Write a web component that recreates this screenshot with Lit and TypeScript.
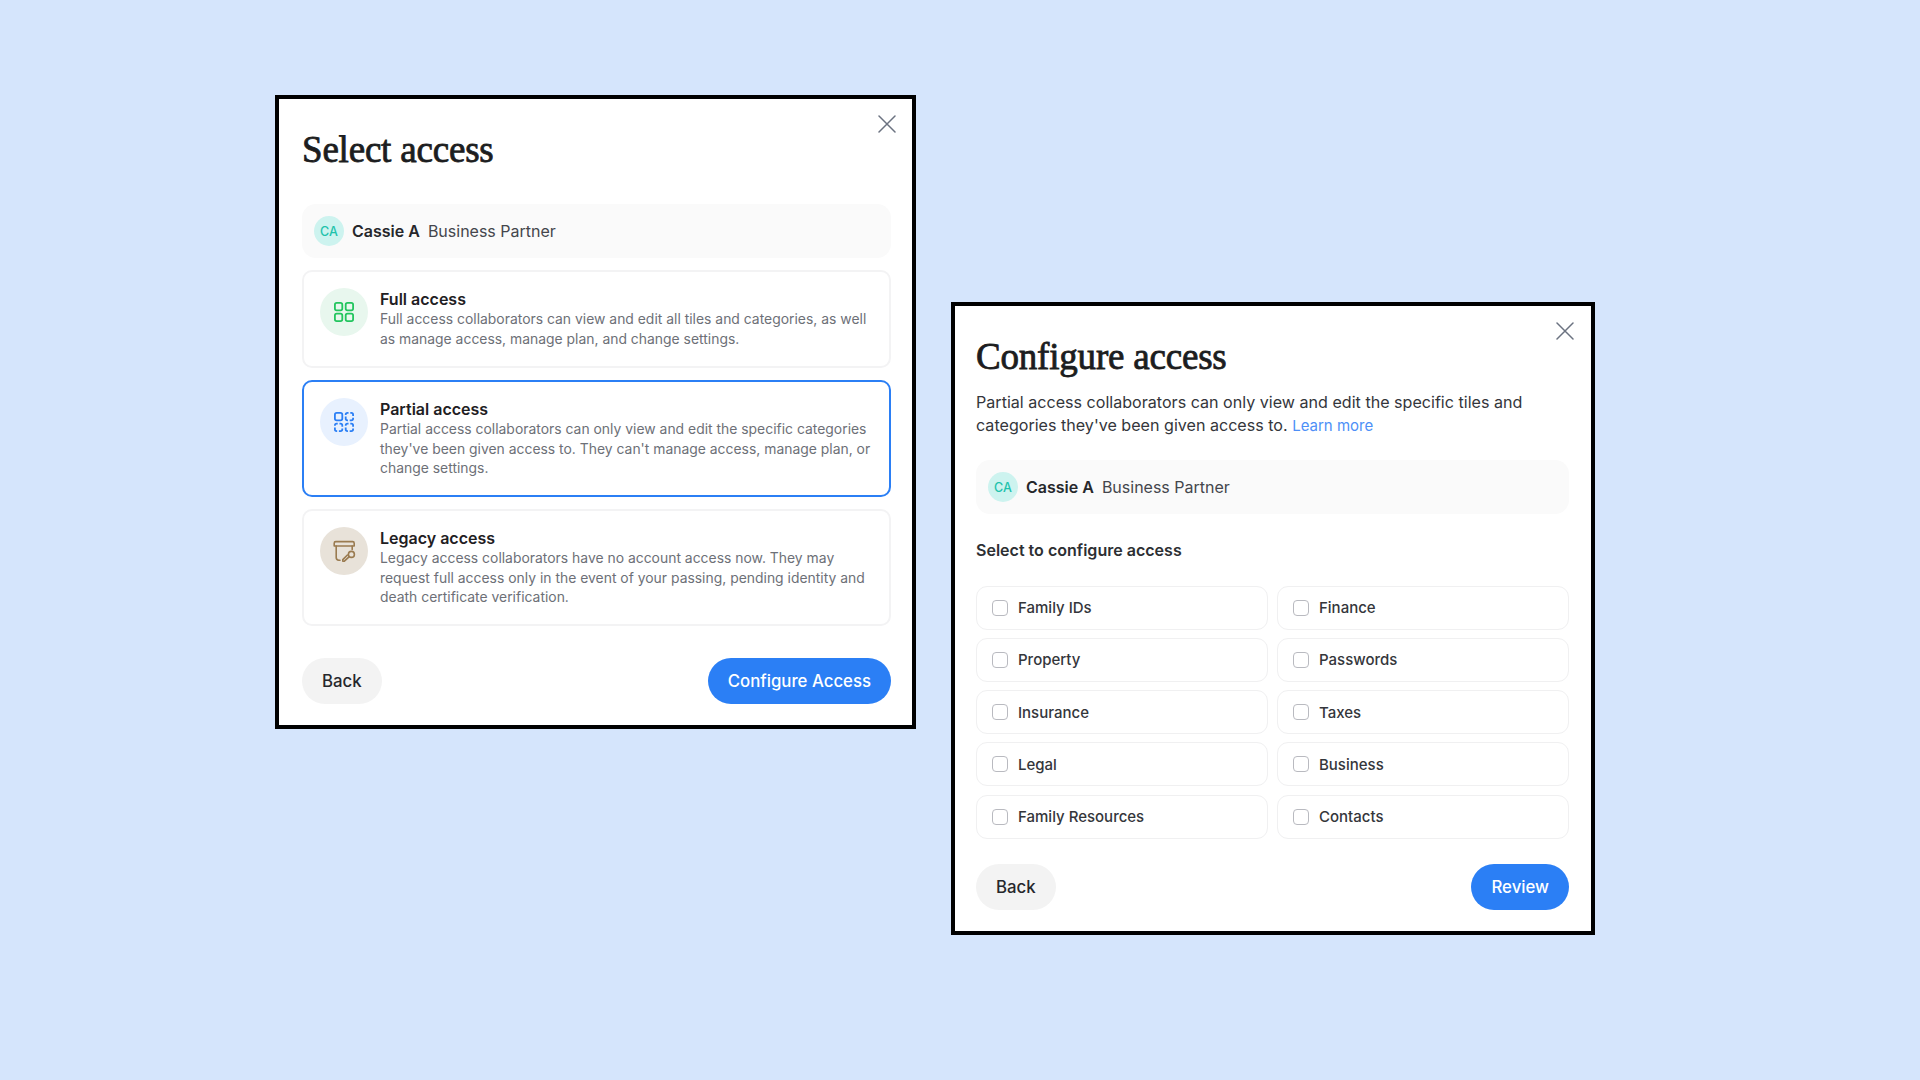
import { LitElement, html, css, svg } from "lit";
import { customElement } from "lit/decorators.js";

const closeIcon = html`<svg class="close-svg" width="18" height="18" viewBox="0 0 18 18" fill="none" stroke="#6b7280" stroke-width="1.5" stroke-linecap="round"><path d="M1 1L17 17M17 1L1 17"/></svg>`;

const gridIcon = html`<svg width="24" height="24" viewBox="0 0 24 24" fill="none" stroke="#22c55e" stroke-width="1.8">
  <rect x="2.9" y="2.9" width="7.4" height="7.4" rx="1.8"/><rect x="13.7" y="2.9" width="7.4" height="7.4" rx="1.8"/>
  <rect x="2.9" y="13.7" width="7.4" height="7.4" rx="1.8"/><rect x="13.7" y="13.7" width="7.4" height="7.4" rx="1.8"/></svg>`;

const dashed = (x: number, y: number) => svg`<rect x=${x} y=${y} width="7.4" height="7.4" rx="1.8" stroke-dasharray="4.9 1.73" stroke-dashoffset="-2.77"/>`;
const partialIcon = html`<svg width="24" height="24" viewBox="0 0 24 24" fill="none" stroke="#2b7ff5" stroke-width="1.8">
  <rect x="2.9" y="2.9" width="7.4" height="7.4" rx="1.8"/>${dashed(13.7, 2.9)}${dashed(2.9, 13.7)}${dashed(13.7, 13.7)}</svg>`;

const legacyIcon = html`<svg width="24" height="24" viewBox="0 0 24 24" fill="none" stroke="#9a7b50" stroke-width="1.6" stroke-linecap="round" stroke-linejoin="round">
  <path d="M2.2 7V4.2Q2.2 2.6 3.8 2.6H20.6Q22.2 2.6 22.2 4.2V7Z"/>
  <path d="M4.2 7V18.6Q4.2 21.2 6.8 21.2H8"/>
  <path d="M20.2 7V10.5"/>
  <circle cx="19.4" cy="15.4" r="3"/>
  <path d="M17.3 17.6L12.4 22.2H10.8V20.6L15.4 16"/></svg>`;

type Card = { icon: unknown; tone: string; title: string; desc: string; selected?: boolean };

const cards: Card[] = [
  { icon: gridIcon, tone: "green", title: "Full access", desc: "Full access collaborators can view and edit all tiles and categories, as well as manage access, manage plan, and change settings." },
  { icon: partialIcon, tone: "blue", selected: true, title: "Partial access", desc: "Partial access collaborators can only view and edit the specific categories they've been given access to. They can't manage access, manage plan, or change settings." },
  { icon: legacyIcon, tone: "tan", title: "Legacy access", desc: "Legacy access collaborators have no account access now. They may request full access only in the event of your passing, pending identity and death certificate verification." },
];

const options = ["Family IDs", "Finance", "Property", "Passwords", "Insurance", "Taxes", "Legal", "Business", "Family Resources", "Contacts"];

@customElement("app-root")
export class AppRoot extends LitElement {
  static styles = css`
    :host {
      display: block;
      min-height: 1080px;
      background: #d5e5fc;
      font-family: Inter, "Liberation Sans", sans-serif;
      color: #1f2023;
    }
    * { box-sizing: border-box; }
    .page {
      display: flex;
      align-items: flex-start;
      gap: 35px;
      padding: 95px 0 0 275px;
    }
    .panel {
      position: relative;
      flex: none;
      background: #fff;
      border: 4px solid #000;
      padding: 0 21px 21px 23px;
    }
    .select { width: 641px; height: 634px; }
    .configure { width: 644px; height: 633px; margin-top: 207px; padding: 0 22px 21px 21px; }
    .close {
      position: absolute;
      top: 16px;
      right: 16px;
      width: 18px;
      height: 18px;
      display: block;
    }
    .configure .close { right: 17px; }
    .close-svg { display: block; }
    h1 {
      margin: 0;
      font-family: "Liberation Serif", serif;
      font-weight: 400;
      font-size: 37px;
      letter-spacing: -0.2px;
      line-height: 44px;
      color: #1c1d20;
      -webkit-text-stroke: 0.8px #1c1d20;
    }
    .select h1 { padding-top: 29px; margin-bottom: 32px; }
    .configure h1 { padding-top: 29px; margin-bottom: 12px; }
    .user {
      display: flex;
      align-items: center;
      height: 54px;
      padding: 0 12px;
      background: #fafafa;
      border-radius: 14px;
      font-size: 16px;
    }
    .avatar {
      width: 30px;
      height: 30px;
      border-radius: 50%;
      background: #cdf3ef;
      color: #1fc2ac;
      font-size: 12.5px;
      font-weight: 500;
      display: flex;
      align-items: center;
      justify-content: center;
      margin-right: 8px;
    }
    .name { font-weight: 600; margin-right: 8px; color: #26272b; }
    .role { color: #44464c; }
    .cards { display: flex; flex-direction: column; gap: 12px; margin-top: 12px; }
    .card {
      display: flex;
      align-items: flex-start;
      gap: 12px;
      padding: 16px 16px 0 16px;
      border: 2px solid #f3f3f4;
      border-radius: 10px;
      height: 98px;
    }
    .card.tall { height: 117px; }
    .card.selected { border-color: #2b7ff5; }
    .circle {
      flex: none;
      width: 48px;
      height: 48px;
      border-radius: 50%;
      display: flex;
      align-items: center;
      justify-content: center;
    }
    .circle svg { display: block; }
    .green { background: #e8f7ee; }
    .blue { background: #e8f1fe; }
    .tan { background: #e8e2d9; }
    .card-title { font-size: 16px; font-weight: 600; line-height: 22px; color: #1f2023; }
    .card-desc { font-size: 13.92px; line-height: 19.5px; color: #6d7077; margin-top: 0.4px; }
    .actions {
      position: absolute;
      left: 23px;
      right: 21px;
      bottom: 21px;
      display: flex;
      justify-content: space-between;
    }
    .configure .actions { left: 21px; right: 22px; }
    .btn {
      height: 46px;
      border: 0;
      border-radius: 23px;
      font-family: inherit;
      font-size: 16.8px;
      font-weight: 500;
      padding: 0 20px;
      display: flex;
      align-items: center;
    }
    .btn.back { background: #f3f3f3; color: #26272b; }
    .btn.primary { background: #2b7ff5; color: #fff; }
    .intro { margin: 0 0 23px; font-size: 16.1px; line-height: 23px; color: #34363b; }
    .intro a { color: #4d8ff7; text-decoration: none; font-size: 15px; }
    .label { margin: 25px 0 24.6px; font-size: 16.05px; font-weight: 600; line-height: 22px; color: #2d2f33; }
    .grid { display: grid; grid-template-columns: 1fr 1fr; gap: 8.3px 9px; }
    .option {
      display: flex;
      align-items: center;
      height: 44px;
      padding: 0 15px;
      border: 1.5px solid #f0f0f1;
      border-radius: 11px;
      font-size: 15px;
      font-weight: 500;
      color: #34363b;
    }
    .box {
      flex: none;
      width: 16px;
      height: 16px;
      border: 1.5px solid #b9bac0;
      border-radius: 4px;
      margin-right: 10px;
    }
  `;

  private user() {
    return html`<div class="user"><span class="avatar">CA</span><span class="name">Cassie A</span><span class="role">Business Partner</span></div>`;
  }

  render() {
    return html`<div class="page">
      <section class="panel select">
        <span class="close">${closeIcon}</span>
        <h1>Select access</h1>
        ${this.user()}
        <div class="cards">
          ${cards.map((c, i) => html`<div class="card ${i > 0 ? "tall" : ""} ${c.selected ? "selected" : ""}">
            <div class="circle ${c.tone}">${c.icon}</div>
            <div><div class="card-title">${c.title}</div><div class="card-desc">${c.desc}</div></div>
          </div>`)}
        </div>
        <div class="actions"><div class="btn back">Back</div><div class="btn primary">Configure Access</div></div>
      </section>
      <section class="panel configure">
        <span class="close">${closeIcon}</span>
        <h1>Configure access</h1>
        <p class="intro">Partial access collaborators can only view and edit the specific tiles and categories they've been given access to. <a>Learn more</a></p>
        ${this.user()}
        <div class="label">Select to configure access</div>
        <div class="grid">
          ${options.map((o) => html`<label class="option"><span class="box"></span>${o}</label>`)}
        </div>
        <div class="actions"><div class="btn back">Back</div><div class="btn primary">Review</div></div>
      </section>
    </div>`;
  }
}
